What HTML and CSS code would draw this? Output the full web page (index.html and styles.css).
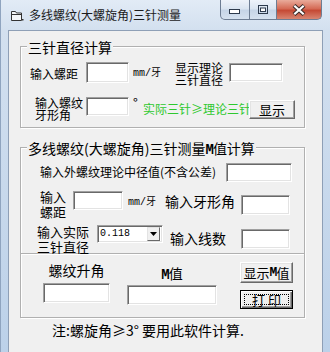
FILE: index.html
```html
<!DOCTYPE html>
<html lang="zh-CN">
<head>
    <meta charset="UTF-8">
    <title>多线螺纹(大螺旋角)三针测量</title>
    <link rel="stylesheet" href="styles.css">
</head>
<body>
<div class="window">
    <div class="titlebar">
        <svg class="app-icon" width="14" height="12" viewBox="0 0 14 12">
            <path d="M1.5 1.5 h4 l1 1.5 h5 v7.5 h-10 z" fill="#f4f6f8" stroke="#333" stroke-width="1"/>
            <path d="M1.5 4.5 h10" stroke="#333" stroke-width="1"/>
            <rect x="12" y="9" width="1.5" height="1.5" fill="#333"/>
        </svg>
        <span class="title">多线螺纹(大螺旋角)三针测量</span>
        <div class="caption">
            <div class="cap cap-min">
                <svg width="12" height="6" viewBox="0 0 12 6"><rect x="0.5" y="0.5" width="10" height="4" fill="#fff" stroke="#2d3a4c"/></svg>
            </div>
            <div class="cap cap-max">
                <svg width="11" height="10" viewBox="0 0 11 10"><rect x="0.5" y="0.5" width="9" height="8" fill="none" stroke="#2d3a4c"/><rect x="2.5" y="3" width="5" height="3.5" fill="#fff" stroke="#2d3a4c"/></svg>
            </div>
            <div class="cap cap-close">
                <svg width="14" height="12" viewBox="0 0 14 12">
                    <path d="M2 1.5 L12 10.5 M12 1.5 L2 10.5" stroke="#3b2a28" stroke-width="4.2"/>
                    <path d="M2.3 1.8 L11.7 10.2 M11.7 1.8 L2.3 10.2" stroke="#fff" stroke-width="2.2"/>
                </svg>
            </div>
        </div>
    </div>

    <div class="client">
        <div class="group group1">
            <div class="group-title">三针直径计算</div>
            <div class="row row-a">
                <span class="lbl lbl-pitch">输入螺距</span>
                <span class="edit edit-pitch"></span>
                <span class="unit unit-a">mm/牙</span>
                <span class="lbl lbl-show">显示理论<br>三针直径</span>
                <span class="edit edit-dia"></span>
            </div>
            <div class="row row-b">
                <span class="lbl lbl-angle">输入螺纹<br>牙形角</span>
                <span class="edit edit-angle"></span>
                <span class="deg">°</span>
                <span class="green">实际三针≥理论三针</span>
                <span class="btn btn-show">显示</span>
            </div>
        </div>

        <div class="group group2">
            <div class="group-title">多线螺纹(大螺旋角)三针测量<span class="m">M</span>值计算</div>
            <div class="row row-c">
                <span class="lbl lbl-mid">输入外螺纹理论中径值(不含公差)</span>
                <span class="edit edit-mid"></span>
            </div>
            <div class="row row-d">
                <span class="lbl lbl-pitch2">输入<br>螺距</span>
                <span class="edit edit-pitch2"></span>
                <span class="unit unit-b">mm/牙</span>
                <span class="lbl lbl-angle2">输入牙形角</span>
                <span class="edit edit-angle2"></span>
            </div>
            <div class="row row-e">
                <span class="lbl lbl-wire">输入实际<br>三针直径</span>
                <span class="combo">
                    <span class="combo-text">0.118</span>
                    <span class="combo-btn">
                        <svg width="7" height="4" viewBox="0 0 7 4"><path d="M0 0 h7 l-3.5 4 z" fill="#000"/></svg>
                    </span>
                </span>
                <span class="lbl lbl-lines">输入线数</span>
                <span class="edit edit-lines"></span>
            </div>
        </div>

        <div class="group group3">
            <div class="col col-lead">
                <span class="col-lbl lbl-lead">螺纹升角</span>
                <span class="edit edit-lead"></span>
            </div>
            <div class="col col-m">
                <span class="col-lbl lbl-m"><span class="m">M</span>值</span>
                <span class="edit edit-m"></span>
            </div>
            <div class="col col-btns">
                <span class="btn btn-m">显示<span class="m">M</span>值</span>
                <span class="btn btn-print"><span class="focus">打印</span></span>
            </div>
        </div>

        <div class="note">注:螺旋角≥3° 要用此软件计算.</div>
    </div>
</div>
</body>
</html>
```

FILE: styles.css
```css
* {
    box-sizing: border-box;
}

body {
    margin: 0;
    width: 330px;
    height: 352px;
    overflow: hidden;
    background: linear-gradient(to bottom, #e2ebf6 0, #d3e0ef 30px, #bcd1e9 100%);
    font-family: "Noto Sans CJK SC", sans-serif;
    color: #000;
}

.window {
    height: 352px;
    display: flex;
    flex-direction: column;
    border-left: 1px solid #8fa4bf;
}

/* title bar */
.titlebar {
    height: 30px;
    flex-shrink: 0;
    display: flex;
    align-items: flex-start;
}

.app-icon {
    margin: 10px 0 0 9px;
}

.title {
    margin: 8px 0 0 5px;
    font-size: 12px;
    line-height: 14px;
    color: #1b1b1b;
}

.caption {
    margin-left: auto;
    margin-right: 8px;
    display: flex;
}

.cap {
    height: 20px;
    display: flex;
    align-items: center;
    justify-content: center;
    border: 1px solid #6d7d93;
    border-top: none;
}

.cap-min {
    width: 30px;
    border-radius: 0 0 0 5px;
    background: linear-gradient(to bottom, #eef3fa, #dbe5f1 45%, #c6d5e7 55%, #d5e1ef);
    padding-top: 5px;
}

.cap-max {
    width: 27px;
    border-left: none;
    background: linear-gradient(to bottom, #eef3fa, #dbe5f1 45%, #c6d5e7 55%, #d5e1ef);
}

.cap-close {
    width: 45px;
    border-left: none;
    border-radius: 0 0 5px 0;
    background: linear-gradient(to bottom, #e9ab9b, #d56b56 45%, #c54a35 55%, #d88571);
}

/* client area */
.client {
    flex: 1;
    margin: 0 7px 0 7px;
    background: #f0f0f0;
    border: 1px solid #8e9fb6;
    border-bottom: none;
    padding: 15px 0 0 11px;
}

.group {
    width: 285px;
    border: 1px solid #b0b0b0;
    box-shadow: inset 1px 1px #fff, 1px 1px #fff;
}

.group-title {
    display: table;
    margin: -8px 0 0 6px;
    padding: 0 1px;
    background: #f0f0f0;
    font-size: 14px;
    line-height: 16px;
}

.group1 {
    height: 82px;
}

.group2 {
    height: 107px;
    margin-top: 19px;
}

.group3 {
    height: 64px;
    border-top: none;
    display: flex;
    align-items: flex-start;
}

.row {
    display: flex;
    align-items: flex-start;
}

.lbl {
    flex-shrink: 0;
    white-space: nowrap;
}

.m {
    font-family: "Liberation Mono", monospace;
    font-weight: bold;
    letter-spacing: -1px;
}

/* sunken text boxes */
.edit {
    flex-shrink: 0;
    display: block;
    background: #fff;
    border: 1px solid;
    border-color: #a0a0a0 #fff #fff #a0a0a0;
    box-shadow: inset 1px 1px #696969, inset -1px -1px #e3e3e3;
}

/* raised buttons */
.btn {
    flex-shrink: 0;
    display: flex;
    align-items: center;
    justify-content: center;
    background: #f0f0f0;
    border: 1px solid;
    border-color: #fff #696969 #696969 #fff;
    box-shadow: inset -1px -1px #a0a0a0, inset 1px 1px #e3e3e3;
    font-size: 13px;
    line-height: 14px;
}

.unit {
    font-family: "Liberation Mono", "Noto Sans CJK SC", monospace;
    font-size: 10px;
    line-height: 12px;
    flex-shrink: 0;
    color: #000;
}

/* first group */
.row-a {
    margin-top: 7px;
    height: 23px;
}

.lbl-pitch {
    margin: 5px 0 0 9px;
    width: 56px;
    font-size: 12px;
    line-height: 14px;
}

.edit-pitch {
    width: 43px;
    height: 21px;
}

.unit-a {
    margin: 6px 0 0 4px;
    width: 42px;
}

.lbl-show {
    width: 54px;
    font-size: 12px;
    line-height: 12px;
}

.edit-dia {
    margin-top: 1px;
    width: 54px;
    height: 19px;
}

.row-b {
    margin-top: 11px;
    height: 25px;
}

.lbl-angle {
    margin: 1px 0 0 14px;
    width: 51px;
    font-size: 12px;
    line-height: 12px;
}

.edit-angle {
    margin-top: 1px;
    width: 43px;
    height: 19px;
}

.deg {
    width: 14px;
    padding-left: 4px;
    font-size: 13px;
    line-height: 14px;
    flex-shrink: 0;
}

.green {
    margin-top: 6px;
    width: 106px;
    font-size: 12px;
    line-height: 14px;
    color: #2ec82e;
    white-space: nowrap;
    flex-shrink: 0;
}

.btn-show {
    margin-top: 4px;
    width: 46px;
    height: 19px;
}

/* second group */
.row-c {
    margin-top: 5px;
    height: 19px;
}

.lbl-mid {
    margin: 2px 0 0 19px;
    width: 186px;
    font-size: 12px;
    line-height: 14px;
}

.edit-mid {
    width: 66px;
    height: 19px;
}

.row-d {
    margin-top: 7px;
    height: 29px;
}

.lbl-pitch2 {
    margin-left: 19px;
    width: 33px;
    font-size: 13px;
    line-height: 15px;
}

.edit-pitch2 {
    margin-top: 2px;
    width: 50px;
    height: 19px;
}

.unit-b {
    margin: 8px 0 0 5px;
    width: 37px;
}

.lbl-angle2 {
    margin-top: 4px;
    width: 76px;
    font-size: 14px;
    line-height: 16px;
}

.edit-angle2 {
    margin-top: 6px;
    width: 49px;
    height: 20px;
}

.row-e {
    margin-top: 6px;
    height: 29px;
}

.lbl-wire {
    margin-left: 16px;
    width: 60px;
    font-size: 13px;
    line-height: 15px;
}

.combo {
    flex-shrink: 0;
    margin-top: 1px;
    width: 66px;
    height: 18px;
    display: flex;
    align-items: center;
    background: #fff;
    border: 1px solid;
    border-color: #a0a0a0 #fff #fff #a0a0a0;
    box-shadow: inset 1px 1px #696969, inset -1px -1px #e3e3e3;
    padding: 0 2px 0 2px;
}

.combo-text {
    font-family: "Liberation Mono", monospace;
    font-size: 10px;
    line-height: 12px;
}

.combo-btn {
    margin-left: auto;
    width: 13px;
    height: 14px;
    display: flex;
    align-items: center;
    justify-content: center;
    background: #f0f0f0;
    border: 1px solid;
    border-color: #e3e3e3 #696969 #696969 #e3e3e3;
}

.lbl-lines {
    margin: 6px 0 0 7px;
    width: 71px;
    font-size: 14px;
    line-height: 16px;
}

.edit-lines {
    margin-top: 5px;
    width: 49px;
    height: 20px;
}

/* bottom frame */
.col {
    display: flex;
    flex-direction: column;
    align-items: center;
    flex-shrink: 0;
}

.col-lbl {
    font-size: 14px;
    line-height: 16px;
    white-space: nowrap;
}

.col-lead {
    margin-left: 22px;
    width: 67px;
}

.lbl-lead {
    margin-top: 8px;
}

.edit-lead {
    margin-top: 5px;
    width: 67px;
    height: 20px;
}

.col-m {
    margin-left: 17px;
    width: 90px;
}

.lbl-m {
    margin-top: 11px;
}

.edit-m {
    margin-top: 2px;
    width: 90px;
    height: 20px;
}

.col-btns {
    margin-left: 23px;
    width: 53px;
}

.btn-m {
    margin-top: 8px;
    width: 53px;
    height: 21px;
}

.btn-print {
    margin-top: 7px;
    width: 53px;
    height: 19px;
    border-color: #000;
    box-shadow: inset 1px 1px #fff, inset -1px -1px #696969, inset -2px -2px #a0a0a0;
    padding: 3px;
}

.focus {
    width: 100%;
    height: 100%;
    display: flex;
    align-items: center;
    justify-content: center;
    border: 1px dotted #000;
    letter-spacing: 3px;
    padding-left: 3px;
}

.note {
    margin: 3px 0 0 32px;
    font-size: 14px;
    line-height: 18px;
    white-space: nowrap;
}
```
